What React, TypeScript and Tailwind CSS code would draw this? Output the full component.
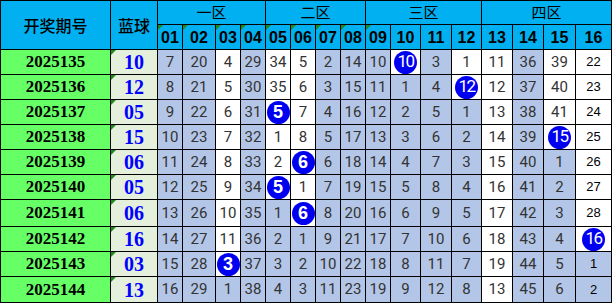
const data: [string, string, string][] = [
  ['2025135', '10', '7b 20b 4w 29b 34w 5w 2b 14b 10b *10 3b 1w 11w 36b 39w 22w'],
  ['2025136', '12', '8b 21b 5w 30b 35w 6w 3b 15b 11b 1b 4b *12 12w 37b 40w 23w'],
  ['2025137', '05', '9b 22b 6w 31b *5 7w 4b 16b 12b 2b 5b 1b 13w 38b 41w 24w'],
  ['2025138', '15', '10b 23b 7w 32b 1w 8w 5b 17b 13b 3b 6b 2b 14w 39b *15 25w'],
  ['2025139', '06', '11b 24b 8w 33b 2w *6 6b 18b 14b 4b 7b 3b 15w 40b 1b 26w'],
  ['2025140', '05', '12b 25b 9w 34b *5 1w 7b 19b 15b 5b 8b 4b 16w 41b 2b 27w'],
  ['2025141', '06', '13b 26b 10w 35b 1b *6 8b 20b 16b 6b 9b 5b 17w 42b 3b 28w'],
  ['2025142', '16', '14b 27b 11w 36b 2b 1b 9b 21b 17b 7b 10b 6b 18w 43b 4b *16'],
  ['2025143', '03', '15b 28b *3 37b 3b 2b 10b 22b 18b 8b 11b 7b 19w 44b 5b 1b'],
  ['2025144', '13', '16b 29b 1b 38b 4b 3b 11b 23b 19b 9b 12b 8b 13w 45b 6b 2b'],
];

const zones = ['一区', '二区', '三区', '四区'];
const nums = Array.from({ length: 16 }, (_, i) => String(i + 1).padStart(2, '0'));

function Tri() {
  return (
    <span className="absolute left-0 top-0 h-0 w-0 border-r-[5px] border-t-[5px] border-r-transparent border-t-[#1f8a1f]" />
  );
}

function Ball({ n }: { n: string }) {
  const two = n.length > 1;
  return (
    <span
      className={
        two
          ? 'flex h-[23px] w-[23px] items-center justify-center rounded-full bg-[#0000f0] font-["Roboto",sans-serif] text-[17px] tracking-[-1.5px] text-white'
          : 'flex h-[23px] w-[23px] items-center justify-center rounded-full bg-[#0000f0] font-["Liberation_Sans",sans-serif] text-[18px] font-bold text-white'
      }
    >
      {n}
    </span>
  );
}

export default function App() {
  const cell = 'relative flex items-center justify-center border-b border-r border-black';
  return (
    <div className="h-[303px] w-[612px] overflow-hidden bg-white">
      <div className="grid grid-cols-[111px_47px_25px_33px_25px_25px_25px_25px_25px_25px_25px_30px_31px_30px_31px_31px_32px_36px] grid-rows-[25px_25px_25px_25px_25px_25px_25px_25px_27px_25px_25px_26px]">
        {/* header */}
        <div className={`${cell} row-span-2 border-l border-t bg-[#00b0f0] font-["Noto_Sans_CJK_SC",sans-serif] text-[16px] font-medium text-black`}>
          开奖期号
        </div>
        <div className={`${cell} row-span-2 border-t bg-[#00b0f0] font-["Noto_Sans_CJK_SC",sans-serif] text-[16px] font-medium text-black`}>
          蓝球
        </div>
        {zones.map((z) => (
          <div
            key={z}
            className={`${cell} col-span-4 border-t bg-[#00b0f0] font-["Noto_Sans_CJK_SC",sans-serif] text-[15px] text-black`}
          >
            {z}
          </div>
        ))}
        {nums.map((n, i) => (
          <div
            key={n}
            className={`${cell} bg-[#00b0f0] pt-px font-["Liberation_Sans",sans-serif] text-[16px] font-bold text-black`}
          >
            {i < 9 && <Tri />}
            {n}
          </div>
        ))}

        {/* rows */}
        {data.map(([issue, blue, cells]) => (
          <Row key={issue} issue={issue} blue={blue} cells={cells.split(' ')} cell={cell} />
        ))}
      </div>
    </div>
  );
}

function Row({ issue, blue, cells, cell }: { issue: string; blue: string; cells: string[]; cell: string }) {
  return (
    <>
      <div className={`${cell} border-l bg-[#66ff66] font-["Liberation_Serif",serif] text-[17px] font-bold text-black`}>
        {issue}
      </div>
      <div className={`${cell} bg-[#e4efdc] font-["Liberation_Serif",serif] text-[20px] font-bold text-[#0000ff]`}>
        <Tri />
        {blue}
      </div>
      {cells.map((c, i) => {
        if (c.startsWith('*')) {
          return (
            <div key={i} className={`${cell} bg-white`}>
              <Ball n={c.slice(1)} />
            </div>
          );
        }
        const v = c.slice(0, -1);
        const bg = c.endsWith('b') ? 'bg-[#b4c6e7]' : 'bg-white';
        return (
          <div
            key={i}
            className={
              i === 15
                ? `${cell} ${bg} font-["Liberation_Sans",sans-serif] text-[13px] text-black`
                : `${cell} ${bg} font-["Roboto",sans-serif] text-[15px] text-[#333]`
            }
          >
            {v}
          </div>
        );
      })}
    </>
  );
}
